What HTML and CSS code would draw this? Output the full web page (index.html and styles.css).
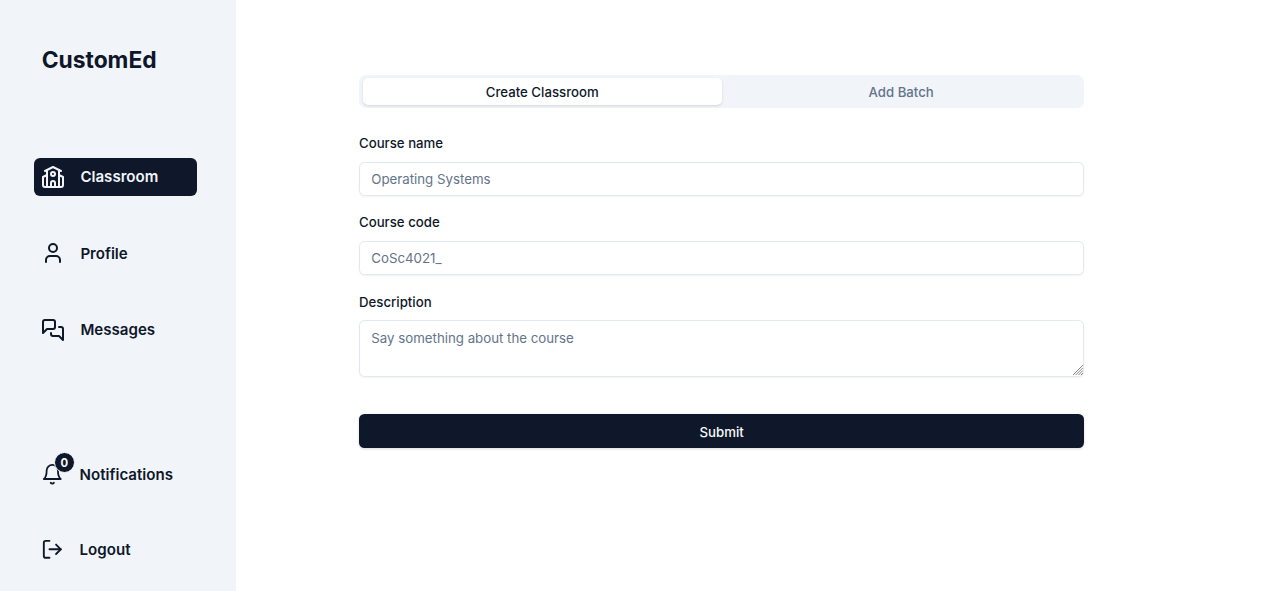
FILE: index.html
```html
<!DOCTYPE html>
<html lang="en">
<head>
<meta charset="utf-8">
<title>CustomEd</title>
<link rel="stylesheet" href="styles.css">
</head>
<body>
<div class="layout">
  <aside class="sidebar">
    <h1 class="brand">CustomEd</h1>
    <nav class="nav">
      <a class="nav-item active">
        <svg class="icon" viewBox="0 0 24 24"><path d="m4 6 8-4 8 4"/><path d="m18 10 4 2v8a2 2 0 0 1-2 2H4a2 2 0 0 1-2-2v-8l4-2"/><path d="M14 22v-4a2 2 0 0 0-4 0v4"/><path d="M18 5v17"/><path d="M6 5v17"/><circle cx="12" cy="9" r="2"/></svg>
        <span>Classroom</span>
      </a>
      <a class="nav-item">
        <svg class="icon" viewBox="0 0 24 24"><path d="M19 21v-2a4 4 0 0 0-4-4H9a4 4 0 0 0-4 4v2"/><circle cx="12" cy="7" r="4"/></svg>
        <span>Profile</span>
      </a>
      <a class="nav-item">
        <svg class="icon" viewBox="0 0 24 24"><path d="M14 9a2 2 0 0 1-2 2H6l-4 4V4c0-1.1.9-2 2-2h8a2 2 0 0 1 2 2v5Z"/><path d="M18 9h2a2 2 0 0 1 2 2v11l-4-4h-6a2 2 0 0 1-2-2v-1"/></svg>
        <span>Messages</span>
      </a>
    </nav>
    <div class="nav nav-bottom">
      <a class="nav-item">
        <span class="bell">
          <svg class="icon" viewBox="0 0 24 24"><path d="M6 8a6 6 0 0 1 12 0c0 7 3 9 3 9H3s3-2 3-9"/><path d="M10.3 21a1.94 1.94 0 0 0 3.4 0"/></svg>
          <span class="badge">0</span>
        </span>
        <span>Notifications</span>
      </a>
      <a class="nav-item">
        <svg class="icon" viewBox="0 0 24 24"><path d="M9 21H5a2 2 0 0 1-2-2V5a2 2 0 0 1 2-2h4"/><path d="m16 17 5-5-5-5"/><path d="M21 12H9"/></svg>
        <span>Logout</span>
      </a>
    </div>
  </aside>
  <main class="main">
    <div class="panel">
      <div class="tabs">
        <button class="tab selected">Create Classroom</button>
        <button class="tab">Add Batch</button>
      </div>
      <form class="form">
        <div class="field">
          <label class="label" for="name">Course name</label>
          <input class="control" id="name" placeholder="Operating Systems">
        </div>
        <div class="field">
          <label class="label" for="code">Course code</label>
          <input class="control" id="code" placeholder="CoSc4021_">
        </div>
        <div class="field">
          <label class="label" for="description">Description</label>
          <div class="area-wrap">
            <textarea class="control area" id="description" placeholder="Say something about the course"></textarea>
            <svg class="grip" viewBox="0 0 10 10"><path d="M0 10 10 0M2.7 10 10 2.7M5.4 10 10 5.4M8 10l2-2"/></svg>
          </div>
        </div>
        <button class="submit" type="button">Submit</button>
      </form>
    </div>
  </main>
</div>
</body>
</html>
```
FILE: styles.css
```css
* { box-sizing: border-box; }
body {
  margin: 0;
  font-family: Inter, "Liberation Sans", sans-serif;
  color: #0f172a;
  background: #fff;
}
button, input, textarea { font: inherit; }
.layout { display: flex; height: 591px; overflow: hidden; }
.sidebar {
  width: 235.6px;
  flex: none;
  padding: 44px 39px 22.4px 34px;
  background: #f1f5f9;
  display: flex;
  flex-direction: column;
}
.brand {
  margin: 0 0 81.6px;
  padding-left: 7.7px;
  font-size: 22.8px;
  line-height: 32px;
  font-weight: 700;
}
.nav { display: flex; flex-direction: column; gap: 37.8px; }
.nav-item {
  display: flex;
  align-items: center;
  gap: 15.2px;
  height: 38.6px;
  padding: 0 7.2px;
  border-radius: 6px;
  font-size: 15.1px;
  font-weight: 600;
}
.active { background: #0f172a; color: #f1f5f9; }
.active span { line-height: 18px; }
.icon {
  width: 24px;
  height: 24px;
  flex: none;
  display: block;
  fill: none;
  stroke: currentColor;
  stroke-width: 2;
  stroke-linecap: round;
  stroke-linejoin: round;
}
.nav-bottom { margin-top: auto; gap: 36.6px; }
.nav-bottom .nav-item { gap: 15.6px; padding-left: 7.4px; }
.nav-bottom .icon { width: 22.6px; height: 22.6px; }
.nav-bottom .nav-item > span:last-child { line-height: 19px; }
.bell { position: relative; }
.bell .icon { stroke-width: 1.9; }
.badge {
  position: absolute;
  left: 12.4px;
  top: -10.6px;
  width: 21px;
  height: 21px;
  border: 1px solid #f8fafc;
  border-radius: 50%;
  background: #0f172a;
  color: #f8fafc;
  font-size: 11.3px;
  font-weight: 700;
  line-height: 20px;
  text-align: center;
}
.main { flex: 1; padding: 74.6px 0 0 123.4px; }
.panel { width: 725.4px; }
.tabs {
  display: flex;
  height: 33.8px;
  padding: 3.8px;
  border-radius: 7px;
  background: #f1f5f9;
}
.tab {
  flex: 1;
  padding: 1px 0 0;
  border: 0;
  border-radius: 5px;
  background: none;
  color: #64748b;
  font-size: 13.22px;
  font-weight: 500;
}
.selected { background: #fff; color: #0f172a; box-shadow: 0 1px 3px rgba(0,0,0,.1), 0 1px 2px -1px rgba(0,0,0,.1); }
.form { display: flex; flex-direction: column; gap: 19.8px; padding-top: 27.8px; }
.field { display: flex; flex-direction: column; gap: 11.4px; }
.label { font-size: 13.22px; line-height: 14px; font-weight: 500; }
.control {
  display: block;
  width: 100%;
  height: 34px;
  padding: 4px 11.3px;
  border: 1px solid #e2e8f0;
  border-radius: 5.5px;
  background: transparent;
  box-shadow: 0 1px 2px rgba(0,0,0,.05);
  font-size: 13.27px;
  line-height: 19px;
}
.control::placeholder { color: #64748b; opacity: 1; }
.area-wrap { position: relative; }
.area { height: 57px; padding-top: 8px; resize: none; }
.grip {
  position: absolute;
  right: 1.5px;
  bottom: 1.5px;
  width: 10px;
  height: 10px;
  fill: none;
  stroke: #777;
  stroke-width: .9;
}
.submit {
  height: 34px;
  margin-top: 17.4px;
  padding: 1px 0 0;
  border: 0;
  border-radius: 5.5px;
  background: #0f172a;
  color: #f8fafc;
  font-size: 13.22px;
  font-weight: 500;
  box-shadow: 0 1px 3px rgba(0,0,0,.15);
}
```
